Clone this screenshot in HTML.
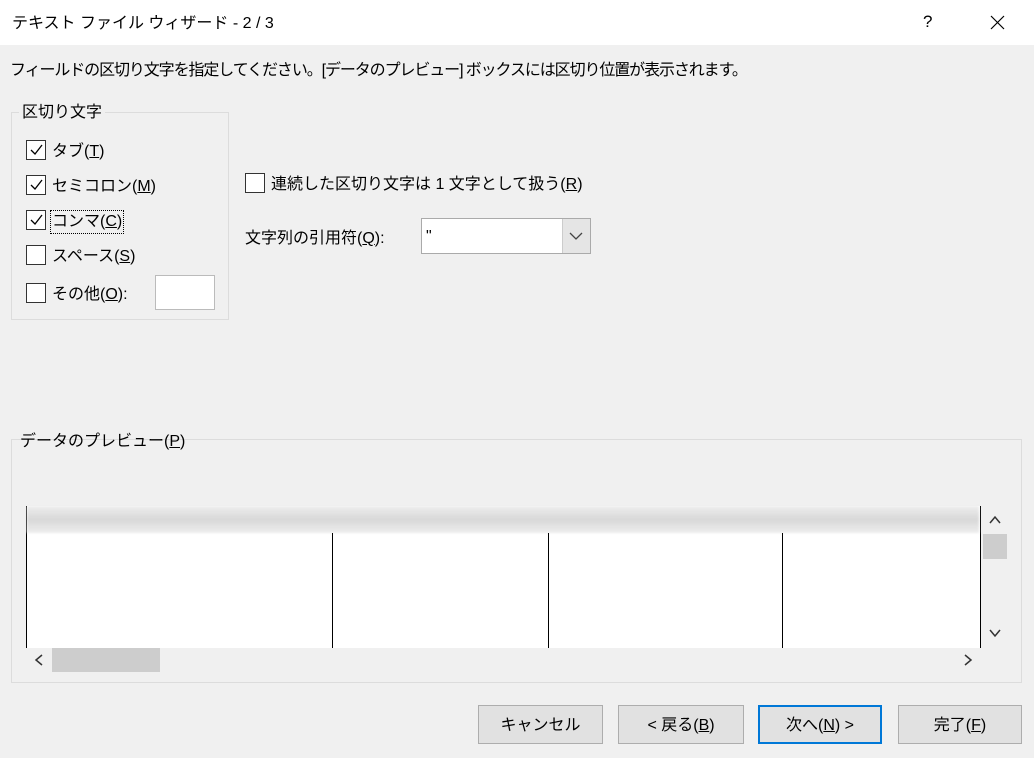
<!DOCTYPE html>
<html><head><meta charset="utf-8"><style>
*{box-sizing:border-box}
body{margin:0;width:1034px;height:758px;background:#f0f0f0;font-family:"Liberation Sans","Noto Sans CJK JP",sans-serif;font-size:16px;color:#000;position:relative;overflow:hidden}
.a{position:absolute;white-space:nowrap;line-height:20px}
.cb{position:absolute;width:20px;height:20px;border:1px solid #333;background:#fff}
.cb svg{position:absolute;left:2px;top:2px}
.grp{position:absolute;border:1px solid #dcdcdc}
.btn{position:absolute;top:705px;height:39px;background:#e1e1e1;border:1px solid #adadad;text-align:center;line-height:39px}
u{text-decoration:underline}
</style></head><body>
<div style="position:absolute;left:0;top:0;width:1034px;height:45px;background:#fff"></div>
<div class="a" style="left:12px;top:14px">テキスト ファイル ウィザード - 2 / 3</div>
<div class="a" style="left:923px;top:12px;font-size:17px">?</div>
<svg style="position:absolute;left:990px;top:15px" width="15" height="15"><path d="M1 1L14 14M14 1L1 14" stroke="#000" stroke-width="1.2"/></svg>
<div class="a" style="left:10px;top:61px;letter-spacing:-1.1px">フィールドの区切り文字を指定してください。[データのプレビュー] ボックスには区切り位置が表示されます。</div>

<div class="grp" style="left:11px;top:112px;width:218px;height:208px"></div>
<div class="a" style="left:19px;top:103px;background:#f0f0f0;padding:0 3px">区切り文字</div>
<div class="cb" style="left:26px;top:140px"><svg width="14" height="14"><path d="M2 7L6 11L13 2" stroke="#000" fill="none" stroke-width="1.3"/></svg></div>
<div class="a" style="left:52px;top:142px">タブ(<u>T</u>)</div>
<div class="cb" style="left:26px;top:175px"><svg width="14" height="14"><path d="M2 7L6 11L13 2" stroke="#000" fill="none" stroke-width="1.3"/></svg></div>
<div class="a" style="left:52px;top:177px">セミコロン(<u>M</u>)</div>
<div class="cb" style="left:26px;top:210px"><svg width="14" height="14"><path d="M2 7L6 11L13 2" stroke="#000" fill="none" stroke-width="1.3"/></svg></div>
<div class="a" style="left:50px;top:210px;border:1px dotted #000;padding:0 1px;line-height:22px">コンマ(<u>C</u>)</div>
<div class="cb" style="left:26px;top:245px"></div>
<div class="a" style="left:52px;top:247px">スペース(<u>S</u>)</div>
<div class="cb" style="left:26px;top:283px"></div>
<div class="a" style="left:52px;top:285px">その他(<u>O</u>):</div>
<div style="position:absolute;left:155px;top:275px;width:60px;height:35px;background:#fff;border:1px solid #bbb"></div>

<div class="cb" style="left:245px;top:173px"></div>
<div class="a" style="left:271px;top:175px">連続した区切り文字は 1 文字として扱う(<u>R</u>)</div>
<div class="a" style="left:245px;top:229px">文字列の引用符(<u>Q</u>):</div>
<div style="position:absolute;left:421px;top:218px;width:170px;height:36px;background:#fff;border:1px solid #aaa"></div>
<div style="position:absolute;left:562px;top:219px;width:28px;height:34px;background:#e5e5e5;border-left:1px solid #ccc"></div>
<svg style="position:absolute;left:569px;top:231px" width="14" height="10"><path d="M1 2L7 8L13 2" stroke="#444" fill="none" stroke-width="1.3"/></svg>
<div class="a" style="left:426px;top:227px">"</div>

<div class="grp" style="left:11px;top:439px;width:1011px;height:244px"></div>
<div class="a" style="left:20px;top:432px;line-height:20px">データのプレビュー(<u>P</u>)</div>
<div style="position:absolute;left:26px;top:506px;width:955px;height:142px;background:#fff;border-left:1px solid #000;border-right:1px solid #000"></div>
<div style="position:absolute;left:27px;top:506px;width:952px;height:27px;background:linear-gradient(#eee,#d8d8d8 50%,#eee);filter:blur(1px)"></div>
<div style="position:absolute;left:332px;top:533px;width:1px;height:115px;background:#000"></div>
<div style="position:absolute;left:548px;top:533px;width:1px;height:115px;background:#000"></div>
<div style="position:absolute;left:782px;top:533px;width:1px;height:115px;background:#000"></div>
<div style="position:absolute;left:983px;top:534px;width:24px;height:25px;background:#cdcdcd"></div>
<svg style="position:absolute;left:989px;top:515px" width="12" height="10"><path d="M1 8L6 2L11 8" stroke="#333" fill="none" stroke-width="1.5"/></svg>
<svg style="position:absolute;left:989px;top:628px" width="12" height="10"><path d="M1 2L6 8L11 2" stroke="#333" fill="none" stroke-width="1.5"/></svg>
<div style="position:absolute;left:52px;top:648px;width:108px;height:24px;background:#cdcdcd"></div>
<svg style="position:absolute;left:34px;top:654px" width="10" height="12"><path d="M8 1L2 6L8 11" stroke="#333" fill="none" stroke-width="1.5"/></svg>
<svg style="position:absolute;left:963px;top:654px" width="10" height="12"><path d="M2 1L8 6L2 11" stroke="#333" fill="none" stroke-width="1.5"/></svg>

<div class="btn" style="left:478px;width:125px">キャンセル</div>
<div class="btn" style="left:618px;width:126px">&lt; 戻る(<u>B</u>)</div>
<div class="btn" style="left:758px;width:124px;border:2px solid #0078d7;line-height:37px">次へ(<u>N</u>) &gt;</div>
<div class="btn" style="left:898px;width:124px">完了(<u>F</u>)</div>
</body></html>
